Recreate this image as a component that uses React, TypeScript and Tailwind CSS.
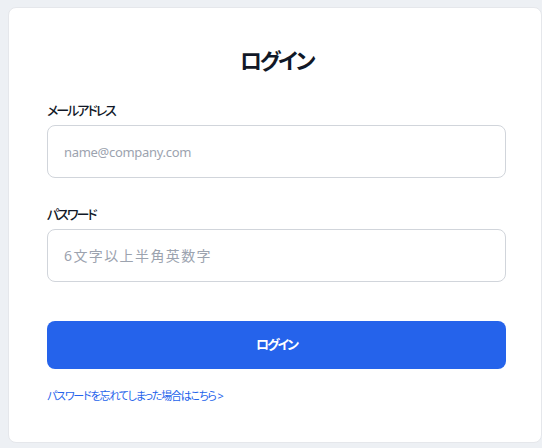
export default function App() {
  return (
    <div
      className="min-h-screen bg-[#edf0f4] pl-2 pt-[7px] overflow-hidden [font-feature-settings:'palt']"
      style={{ fontFamily: '"Noto Sans", "Noto Sans CJK JP", sans-serif' }}
    >
      <div className="w-[534px] h-[436px] bg-white rounded-lg border border-[#e5e7eb] px-[38px] pt-[36px]">
        {/* Title */}
        <h1 className="text-[22px] leading-8 font-semibold tracking-[-2.5px] text-[#111827] text-center w-[459px]">
          ログイン
        </h1>

        <form className="w-[459px] mt-6 flex flex-col" onSubmit={(e) => e.preventDefault()}>
          <label className="text-[13px] leading-5 font-medium tracking-[-2px] text-[#111827]">
            メールアドレス
          </label>
          <input
            type="email"
            placeholder="name@company.com"
            className="mt-[5px] h-[53px] w-full rounded-lg border border-[#d1d5db] px-4 text-[13px] tracking-[-0.3px] text-[#111827] placeholder:text-[#9ca3af] outline-none"
          />

          <label className="mt-[26px] text-[13px] leading-5 font-medium tracking-[-2px] text-[#111827]">
            パスワード
          </label>
          <input
            type="password"
            placeholder="6文字以上半角英数字"
            className="mt-[5px] h-[53px] w-full rounded-lg border border-[#d1d5db] px-4 text-[14px] tracking-[1.4px] text-[#111827] placeholder:text-[#9ca3af] outline-none"
          />

          <button
            type="submit"
            className="mt-[39px] h-12 w-full rounded-lg bg-[#2563eb] text-white text-[13px] font-bold tracking-[-2px]"
          >
            ログイン
          </button>

          <a href="#" className="mt-[19px] text-[11px] leading-4 tracking-[-1.2px] text-[#2563eb]">
            パスワードを忘れてしまった場合はこちら &gt;
          </a>
        </form>
      </div>
    </div>
  );
}
